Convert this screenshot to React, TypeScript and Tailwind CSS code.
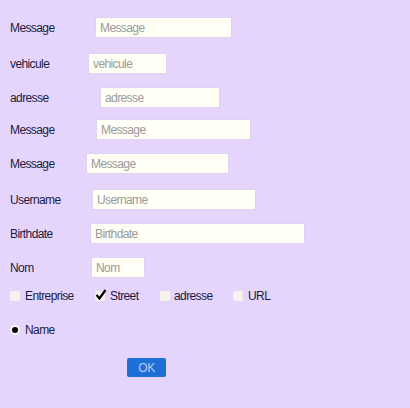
import React from "react";

const rows: { label: string; ph: string; lw: number; iw: number; mt: number }[] = [
  { label: "Message", ph: "Message", lw: 85, iw: 137, mt: 17 },
  { label: "vehicule", ph: "vehicule", lw: 78, iw: 79, mt: 15 },
  { label: "adresse", ph: "adresse", lw: 90, iw: 120, mt: 13 },
  { label: "Message", ph: "Message", lw: 86, iw: 155, mt: 11 },
  { label: "Message", ph: "Message", lw: 76, iw: 143, mt: 13 },
  { label: "Username", ph: "Username", lw: 82, iw: 164, mt: 15 },
  { label: "Birthdate", ph: "Birthdate", lw: 80, iw: 215, mt: 13 },
  { label: "Nom", ph: "Nom", lw: 81, iw: 54, mt: 13 },
];

function Box({ checked }: { checked?: boolean }) {
  return (
    <span className="relative w-[10px] h-[10px] bg-[#f7f2ec] rounded-[2px] shrink-0 flex items-center justify-center">
      {checked && (
        <svg width="12" height="11" viewBox="0 0 12 11" className="absolute left-[0px] top-[-2px]">
          <path d="M1.5 6 L4.5 9.5 L10.5 1" stroke="#000" strokeWidth="2.2" fill="none" />
        </svg>
      )}
    </span>
  );
}

export default function App() {
  return (
    <div
      className="w-[410px] h-[408px] bg-[#e5d5fc] text-[12px] tracking-[-0.6px] text-[#1c1c3c] pl-[10px] flex flex-col"
      style={{ fontFamily: '"Liberation Sans", Arial, sans-serif' }}
    >
      {rows.map((r, i) => (
        <div key={i} className="flex items-center" style={{ marginTop: r.mt }}>
          <span className="shrink-0" style={{ width: r.lw }}>
            {r.label}
          </span>
          <input
            placeholder={r.ph}
            className="h-[21px] bg-[#fffff5] border border-[#ddd3ec] px-[4px] text-[12px] tracking-[-0.6px] placeholder:text-[#9a9a9a] outline-none"
            style={{ width: r.iw, fontFamily: '"Liberation Sans", Arial, sans-serif' }}
          />
        </div>
      ))}
      <div className="flex items-center mt-[10px] h-[16px]">
        <Box />
        <span className="ml-[5px] w-[70px]">Entreprise</span>
        <Box checked />
        <span className="ml-[5px] w-[50px]">Street</span>
        <Box />
        <span className="ml-[4px] w-[59px]">adresse</span>
        <Box />
        <span className="ml-[5px]">URL</span>
      </div>
      <div className="flex items-center mt-[18px] h-[16px]">
        <span className="w-[10px] h-[10px] rounded-full bg-[#f8f6f2] flex items-center justify-center shrink-0">
          <span className="w-[6px] h-[6px] rounded-full bg-black" />
        </span>
        <span className="ml-[5px]">Name</span>
      </div>
      <div className="mt-[20px] pl-[117px]">
        <button className="w-[39px] h-[19px] bg-[#1e6fd6] text-[#bccbf6] text-[12px] tracking-[-0.3px] rounded-[2px] flex items-center justify-center">
          OK
        </button>
      </div>
    </div>
  );
}
